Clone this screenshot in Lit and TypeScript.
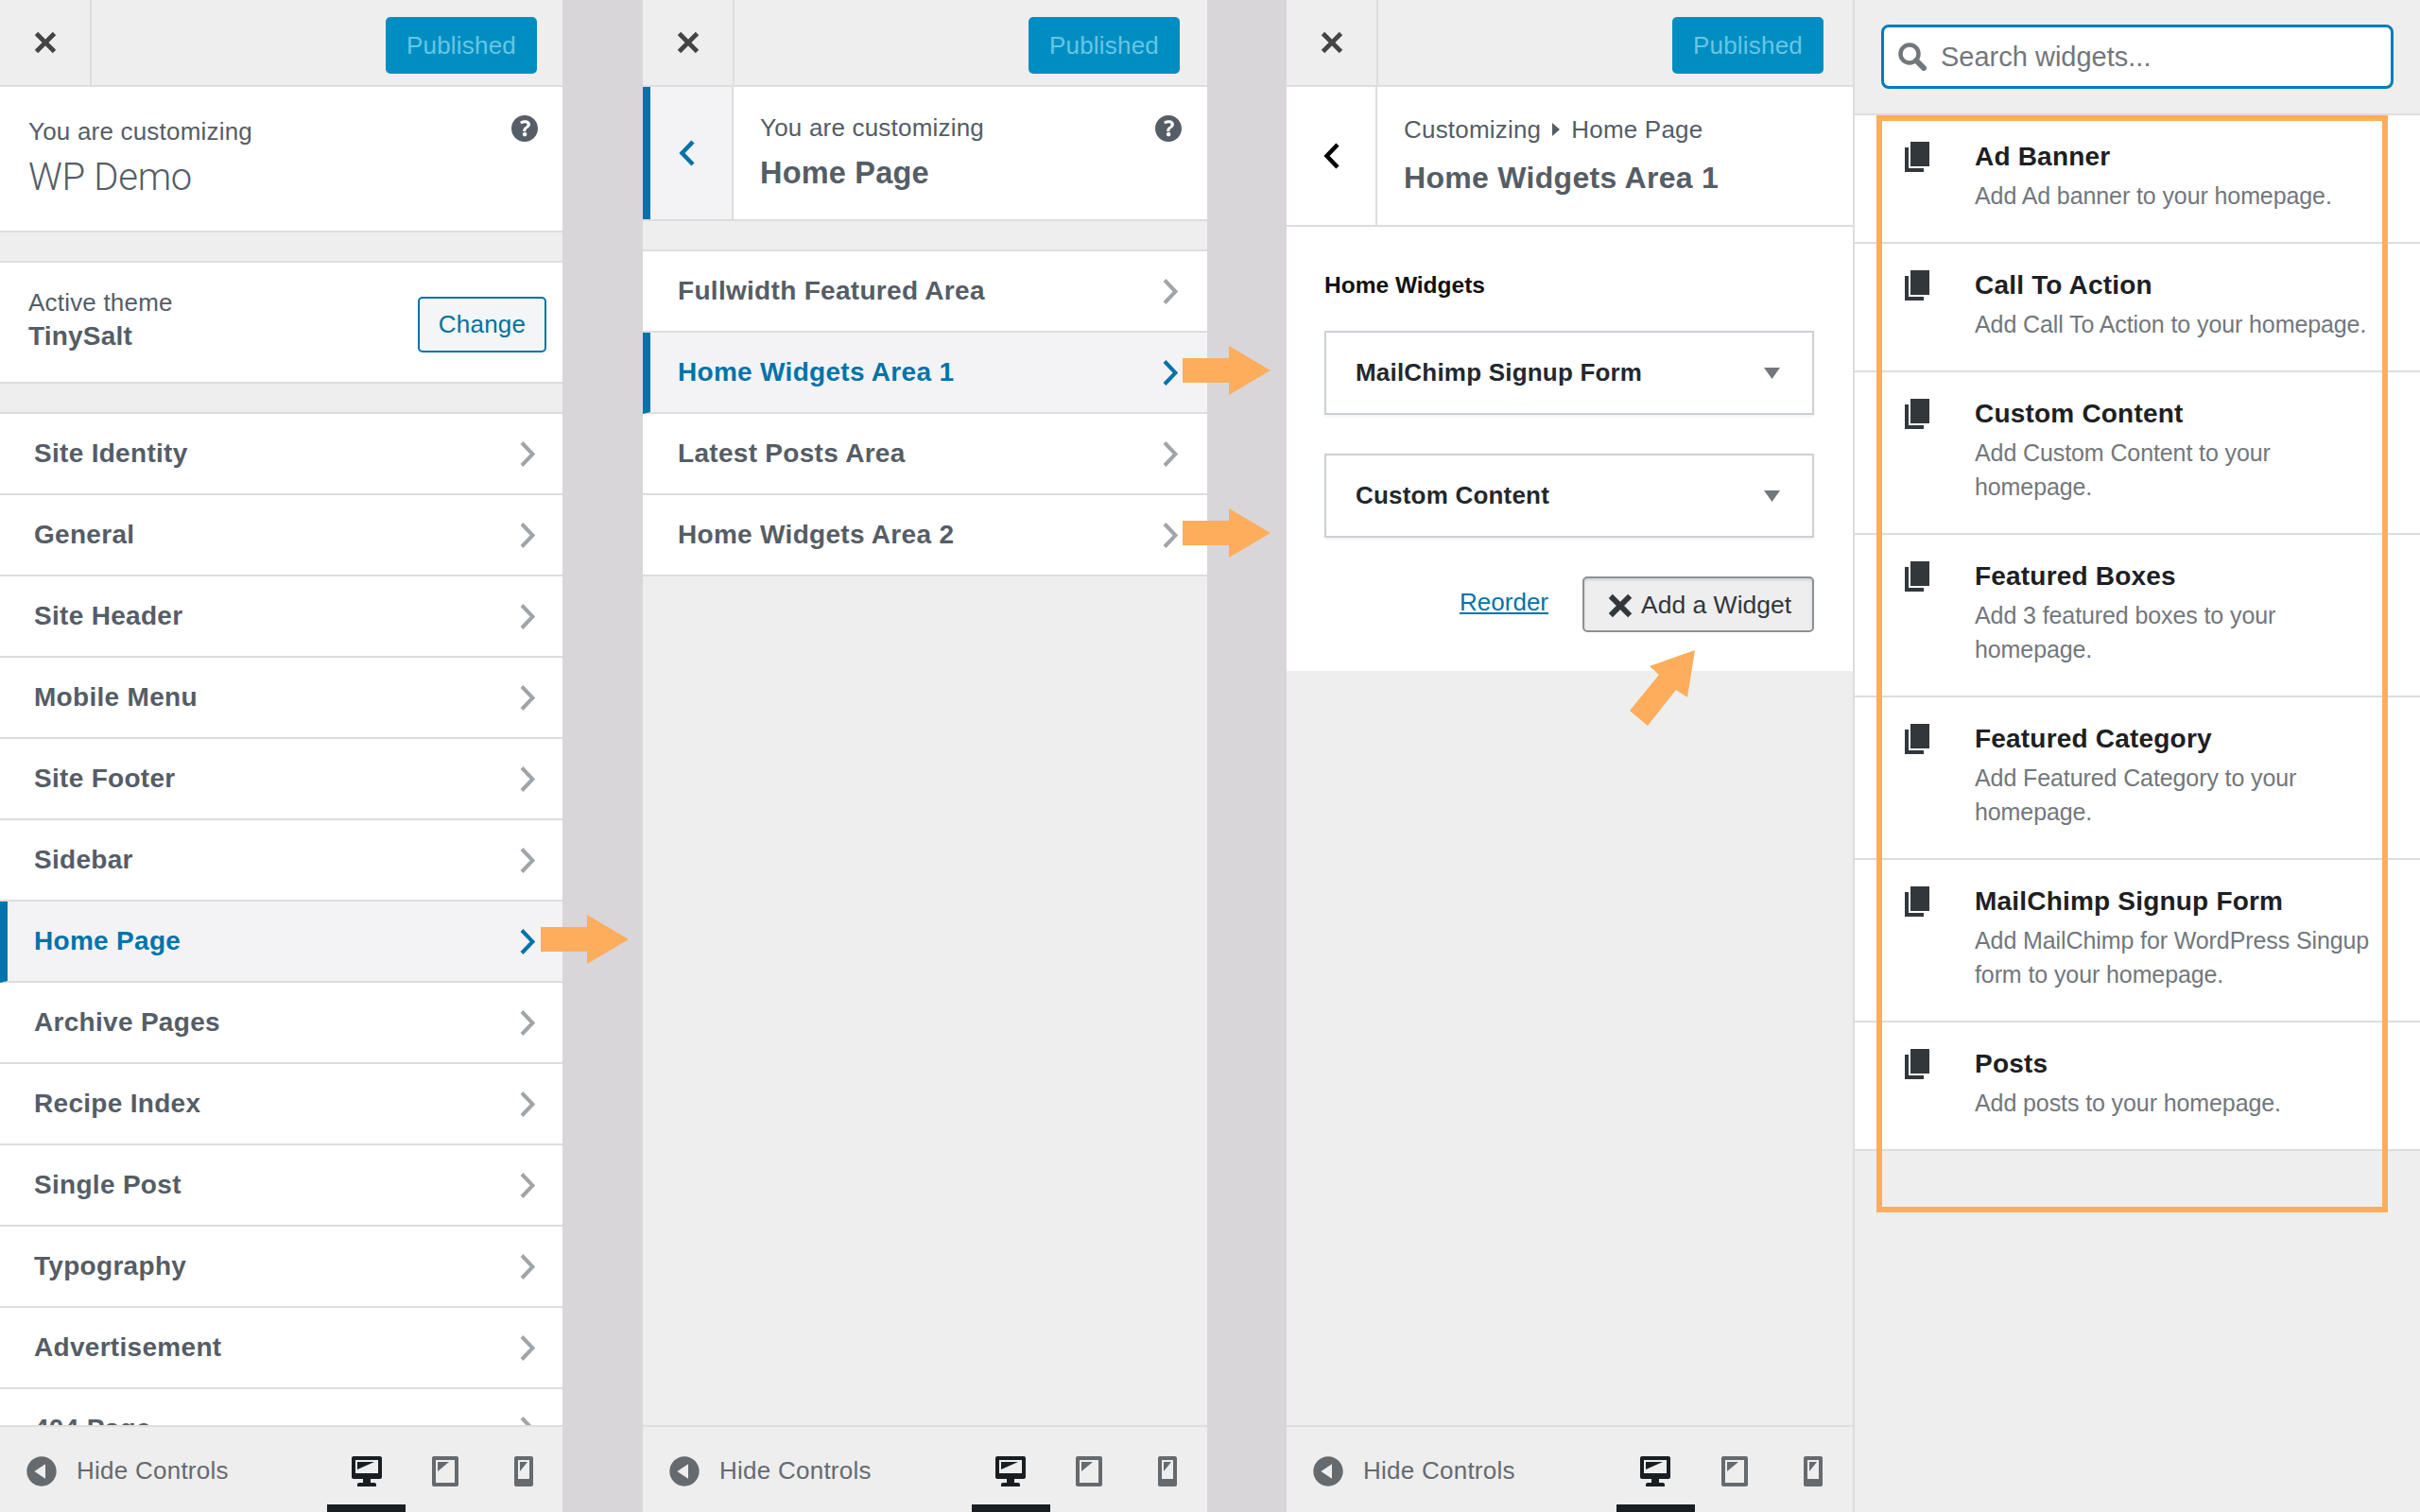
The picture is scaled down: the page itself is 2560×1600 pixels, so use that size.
import { LitElement, html, css, svg } from 'lit';
import { customElement } from 'lit/decorators.js';

const SIDE_ROWS = [
  'Site Identity', 'General', 'Site Header', 'Mobile Menu', 'Site Footer', 'Sidebar', 'Home Page',
  'Archive Pages', 'Recipe Index', 'Single Post', 'Typography', 'Advertisement', '404 Page',
];
const AREA_ROWS = ['Fullwidth Featured Area', 'Home Widgets Area 1', 'Latest Posts Area', 'Home Widgets Area 2'];
const WIDGETS = [
  { name: 'Ad Banner', desc: 'Add Ad banner to your homepage.' },
  { name: 'Call To Action', desc: 'Add Call To Action to your homepage.' },
  { name: 'Custom Content', desc: 'Add Custom Content to your homepage.' },
  { name: 'Featured Boxes', desc: 'Add 3 featured boxes to your homepage.' },
  { name: 'Featured Category', desc: 'Add Featured Category to your homepage.' },
  { name: 'MailChimp Signup Form', desc: 'Add MailChimp for WordPress Singup form to your homepage.' },
  { name: 'Posts', desc: 'Add posts to your homepage.' },
];

// dashicons, drawn at 40px so one unit is two pixels
const icon = (d: string, cls = '') => html`<svg class="dash ${cls}" viewBox="0 0 20 20">${svg`<path d=${d}></path>`}</svg>`;
const X = 'M14.95 6.46L11.41 10l3.54 3.54-1.41 1.41L10 11.42l-3.53 3.53-1.42-1.42L8.58 10 5.05 6.47l1.42-1.42L10 8.58l3.54-3.53z';
const HELP = 'M17 10c0-3.87-3.14-7-7-7-3.87 0-7 3.13-7 7 0 3.86 3.13 7 7 7 3.86 0 7-3.14 7-7zm-6.3 1.48H9.14v-.43c0-.38.08-.7.24-.98s.46-.57.88-.89c.41-.29.68-.53.81-.71.14-.18.2-.39.2-.62 0-.25-.09-.44-.28-.58-.19-.13-.45-.19-.79-.19-.59 0-1.26.19-2.02.57l-.64-1.28c.87-.49 1.8-.74 2.77-.74.81 0 1.45.2 1.92.58.48.39.71.91.71 1.55 0 .43-.09.8-.29 1.11-.19.32-.57.67-1.11 1.06-.38.28-.61.49-.71.63-.1.15-.15.34-.15.57v.35zm-1.47.74c.18-.2.46-.29.83-.29.36 0 .63.1.82.29.2.2.29.47.29.82 0 .33-.09.6-.29.8-.19.19-.46.29-.82.29-.37 0-.65-.1-.83-.29-.2-.19-.29-.46-.29-.8 0-.35.1-.62.29-.82z';
const COLLAPSE = 'M10 2.16c4.33 0 7.84 3.51 7.84 7.84s-3.51 7.84-7.84 7.84S2.16 14.33 2.16 10 5.71 2.16 10 2.16zm2 11.72V6.12L6.18 9.97z';
const DESKTOP = 'M3 2h14c.55 0 1 .45 1 1v10c0 .55-.45 1-1 1h-5v2h2c.55 0 1 .45 1 1v1H5v-1c0-.55.45-1 1-1h2v-2H3c-.55 0-1-.45-1-1V3c0-.55.45-1 1-1zm13 9V4H4v7h12zM5 5h9L5 9V5z';
const TABLET = 'M4 2h12c.55 0 1 .45 1 1v14c0 .55-.45 1-1 1H4c-.55 0-1-.45-1-1V3c0-.55.45-1 1-1zm11 14V4H5v12h10zM6 5h6l-6 5V5z';
const PHONE = 'M6 2h8c.55 0 1 .45 1 1v14c0 .55-.45 1-1 1H6c-.55 0-1-.45-1-1V3c0-.55.45-1 1-1zm7 12V4H7v10h6zM8 5h4l-4 5V5z';

const chevron = () => html`<svg class="chev" viewBox="0 0 16 27"><polyline points="2,1.5 13.5,13.5 2,25.5"></polyline></svg>`;
const backChevron = () => html`<svg class="back-chev" viewBox="0 0 17 28"><polyline points="15,2 3.5,14 15,26"></polyline></svg>`;

@customElement('app-root')
export class AppRoot extends LitElement {
  static override styles = css`
    :host {
      display: block;
      position: relative;
      width: 2560px;
      height: 1600px;
      overflow: hidden;
      background: #d8d6d8;
      font-family: "Liberation Sans", Arial, sans-serif;
      font-size: 26px;
      letter-spacing: 0.2px;
      color: #555d66;
    }
    .page { display: flex; height: 100%; }
    .panel {
      display: flex;
      flex-direction: column;
      height: 100%;
      background: #eeeeee;
      overflow: hidden;
    }
    .p1 { width: 595px; margin-right: 85px; }
    .p2 { width: 597px; margin-right: 84px; }
    .p3 { width: 599px; }
    .p4 { width: 600px; border-left: 2px solid #ddd; box-sizing: border-box; }

    .dash { width: 40px; height: 40px; display: block; flex: none; }
    .dash path { fill: currentColor; }

    .topbar {
      flex: none;
      display: flex;
      align-items: flex-start;
      justify-content: space-between;
      height: 90px;
      border-bottom: 2px solid #ddd;
    }
    .close {
      width: 95px;
      height: 90px;
      border-right: 2px solid #ddd;
      display: flex;
      align-items: center;
      justify-content: center;
      color: #444;
    }
    .close .dash { width: 44px; height: 44px; }
    .close .dash path { stroke: currentColor; stroke-width: 0.3; }
    .published {
      width: 160px;
      height: 60px;
      margin: 18px 27px 0 0;
      border-radius: 5px;
      background: #008ec2;
      color: #66c6e4;
      font-size: 26px;
      display: flex;
      align-items: center;
      justify-content: center;
    }
    .p2 .published { margin-right: 29px; }
    .p3 .published { margin-right: 31px; }

    .body { flex: 1; min-height: 0; overflow: hidden; }

    .info {
      display: flex;
      justify-content: space-between;
      align-items: flex-start;
      height: 124px;
      padding: 28px 20px 0 30px;
      background: #fff;
      border-bottom: 2px solid #ddd;
    }
    .info .dash { margin-top: -4px; }
    .line { line-height: 38px; }
    .site-title {
      margin-top: 2px;
      font-family: Roboto, "Liberation Sans", sans-serif;
      font-weight: 300;
      font-size: 40px;
      line-height: 56px;
      letter-spacing: -0.3px;
    }
    .gap { height: 30px; border-bottom: 2px solid #ddd; }
    .theme {
      display: flex;
      justify-content: space-between;
      align-items: flex-start;
      height: 126px;
      padding-left: 30px;
      background: #fff;
      border-bottom: 2px solid #ddd;
    }
    .theme-text { padding-top: 25px; line-height: 35px; }
    .theme-name { font-weight: 700; font-size: 28px; }
    .change {
      width: 136px;
      height: 59px;
      margin: 36px 17px 0 0;
      box-sizing: border-box;
      border: 2px solid #0073aa;
      border-radius: 5px;
      background: #f3f5f6;
      color: #0071a1;
      display: flex;
      align-items: center;
      justify-content: center;
    }

    .row {
      display: flex;
      align-items: center;
      justify-content: space-between;
      height: 84px;
      padding: 0 29px 0 36px;
      background: #fff;
      border-bottom: 2px solid #ddd;
      font-weight: 700;
      font-size: 28px;
      letter-spacing: 0.3px;
    }
    .p2 .row { padding: 0 31px 0 37px; }
    .row.active {
      background: #f3f3f5;
      color: #0073aa;
      padding-left: 28px;
      border-left: 8px solid #0073aa;
    }
    .p2 .row.active { padding-left: 29px; }
    .chev { width: 16px; height: 27px; flex: none; }
    .chev polyline { fill: none; stroke: #a0a5aa; stroke-width: 4; }
    .row.active .chev polyline { stroke: #0073aa; }

    .section {
      display: flex;
      background: #fff;
      border-bottom: 2px solid #ddd;
    }
    .p2 .section { height: 140px; }
    .p3 .section { height: 146px; }
    .back {
      flex: none;
      box-sizing: border-box;
      width: 96px;
      border-right: 2px solid #ddd;
      display: flex;
      align-items: center;
      justify-content: center;
      color: #000;
    }
    .p2 .back { border-left: 8px solid #0073aa; color: #0073aa; background: #f3f3f5; }
    .back-chev { width: 17px; height: 28px; }
    .p2 .back-chev { margin-right: 10px; }
    .back-chev polyline { fill: none; stroke: currentColor; stroke-width: 4.5; }
    .section-text { flex: 1; padding: 24px 0 0 28px; }
    .p3 .section-text { padding-top: 26px; }
    .section-head { display: flex; justify-content: space-between; align-items: flex-start; padding-right: 21px; }
    .section-title { margin-top: 8px; font-weight: 700; font-size: 32.5px; line-height: 38px; }
    .p3 .section-title { margin-top: 13px; font-size: 32px; letter-spacing: 0.3px; }
    .crumb { display: flex; align-items: center; gap: 12px; line-height: 38px; }
    .crumb-tri { width: 8px; height: 14px; flex: none; }
    .crumb-tri polygon { fill: #555d66; }

    .widgets {
      box-sizing: border-box;
      height: 470px;
      padding: 44px 41px 0 40px;
      background: #fff;
    }
    .widgets-label { font-weight: 700; font-size: 24.5px; line-height: 36px; letter-spacing: 0; color: #111; margin-bottom: 30px; }
    .select {
      box-sizing: border-box;
      display: flex;
      align-items: center;
      justify-content: space-between;
      height: 89px;
      margin-bottom: 41px;
      padding: 0 34px 0 31px;
      border: 2px solid #ccd0d4;
      box-shadow: 0 2px 3px rgba(0, 0, 0, 0.06);
      font-weight: 700;
      color: #23282d;
    }
    .select svg { width: 17px; height: 12px; }
    .select polygon { fill: #72777c; }
    .actions { display: flex; justify-content: flex-end; align-items: center; gap: 36px; }
    .reorder { color: #0073aa; text-decoration: underline; margin-top: -5px; letter-spacing: 0; }
    .add {
      box-sizing: border-box;
      display: flex;
      align-items: center;
      width: 245px;
      height: 59px;
      padding: 2px 0 0 26px;
      border: 2px solid #8c9196;
      border-radius: 5px;
      background: #eeeeee;
      box-shadow: inset 0 2px 3px rgba(0, 0, 0, 0.12);
      color: #32373c;
      font-size: 26.5px;
      letter-spacing: 0;
    }
    .add .dash { width: 46px; height: 46px; margin: 0 -1px 0 -11px; }
    .add .dash path { stroke: currentColor; stroke-width: 0.5; }

    .footer {
      flex: none;
      display: flex;
      align-items: center;
      height: 90px;
      padding-left: 24px;
      border-top: 2px solid #ddd;
      background: #eeeeee;
      color: #656a6f;
    }
    .hide { display: flex; align-items: center; gap: 17px; width: 327px; padding-top: 3px; letter-spacing: 0.25px; }
    .device { position: relative; box-sizing: border-box; width: 84px; height: 90px; padding-top: 3px; display: flex; align-items: center; justify-content: center; }
    .device.on { color: #191e23; }
    .device.on::after {
      content: "";
      position: absolute;
      left: 0;
      right: 0;
      bottom: 0;
      height: 8px;
      background: #191e23;
    }

    .search-wrap { flex: none; box-sizing: border-box; height: 122px; padding: 26px 0 0 28px; border-bottom: 2px solid #ddd; }
    .search {
      box-sizing: border-box;
      display: flex;
      align-items: center;
      gap: 15px;
      width: 542px;
      height: 68px;
      padding-left: 15px;
      border: 3px solid #007cba;
      border-radius: 8px;
      background: #fff;
      color: #72777c;
      font-size: 29px;
      letter-spacing: 0;
    }
    .search svg { width: 30px; height: 30px; flex: none; }
    .search circle, .search line { fill: none; stroke: #72777c; }
    .widget {
      display: flex;
      align-items: flex-start;
      padding: 26px 0 31px 53px;
      background: #fff;
      border-bottom: 2px solid #ddd;
    }
    .widget-icon { width: 26px; height: 32px; margin: 2px 48px 0 0; flex: none; }
    .widget-icon path { fill: #32373c; }
    .widget-name { font-weight: 700; font-size: 28px; line-height: 36px; letter-spacing: 0.2px; color: #1d2023; }
    .widget-desc { width: 430px; margin-top: 5px; font-size: 25px; line-height: 36px; letter-spacing: -0.1px; color: #72777c; }

    /* annotations drawn over the panels */
    .note { position: absolute; pointer-events: none; }
    .note polygon { fill: #fdad5c; }
    .arrow-a { left: 572px; top: 968px; width: 93px; height: 52px; }
    .arrow-b { left: 1251px; top: 366px; width: 93px; height: 52px; }
    .arrow-c { left: 1251px; top: 538px; width: 93px; height: 52px; }
    .arrow-d { left: 1724px; top: 688px; width: 70px; height: 80px; }
    .outline {
      position: absolute;
      left: 1985px;
      top: 122px;
      width: 541px;
      height: 1161px;
      box-sizing: border-box;
      border: 6px solid #fdad5c;
      pointer-events: none;
    }
  `;

  private topbar() {
    return html`<div class="topbar">
      <div class="close">${icon(X)}</div>
      <div class="published">Published</div>
    </div>`;
  }

  private footer() {
    return html`<div class="footer">
      <div class="hide">${icon(COLLAPSE)}<span>Hide Controls</span></div>
      <div class="device on">${icon(DESKTOP)}</div>
      <div class="device">${icon(TABLET)}</div>
      <div class="device">${icon(PHONE)}</div>
    </div>`;
  }

  private row(label: string, active: boolean) {
    return html`<div class="row ${active ? 'active' : ''}"><span>${label}</span>${chevron()}</div>`;
  }

  private arrow(cls: string) {
    return html`<svg class="note ${cls}" viewBox="0 0 93 52"><polygon points="0,13 49,13 49,0 93,26 49,52 49,39 0,39"></polygon></svg>`;
  }

  override render() {
    return html`
      <div class="page">
        <section class="panel p1">
          ${this.topbar()}
          <div class="body">
            <div class="info">
              <div>
                <div class="line">You are customizing</div>
                <div class="site-title">WP Demo</div>
              </div>
              ${icon(HELP)}
            </div>
            <div class="gap"></div>
            <div class="theme">
              <div class="theme-text">
                <div>Active theme</div>
                <div class="theme-name">TinySalt</div>
              </div>
              <div class="change">Change</div>
            </div>
            <div class="gap"></div>
            ${SIDE_ROWS.map(r => this.row(r, r === 'Home Page'))}
          </div>
          ${this.footer()}
        </section>

        <section class="panel p2">
          ${this.topbar()}
          <div class="body">
            <div class="section">
              <div class="back">${backChevron()}</div>
              <div class="section-text">
                <div class="section-head"><div class="line">You are customizing</div>${icon(HELP)}</div>
                <div class="section-title">Home Page</div>
              </div>
            </div>
            <div class="gap"></div>
            ${AREA_ROWS.map(r => this.row(r, r === 'Home Widgets Area 1'))}
          </div>
          ${this.footer()}
        </section>

        <section class="panel p3">
          ${this.topbar()}
          <div class="body">
            <div class="section">
              <div class="back">${backChevron()}</div>
              <div class="section-text">
                <div class="crumb">
                  <span>Customizing</span>
                  <svg class="crumb-tri" viewBox="0 0 8 14"><polygon points="0,0 8,7 0,14"></polygon></svg>
                  <span>Home Page</span>
                </div>
                <div class="section-title">Home Widgets Area 1</div>
              </div>
            </div>
            <div class="widgets">
              <div class="widgets-label">Home Widgets</div>
              ${['MailChimp Signup Form', 'Custom Content'].map(s => html`<div class="select">
                <span>${s}</span>
                <svg viewBox="0 0 17 12"><polygon points="0,0 17,0 8.5,12"></polygon></svg>
              </div>`)}
              <div class="actions">
                <span class="reorder">Reorder</span>
                <div class="add">${icon(X)}<span>Add a Widget</span></div>
              </div>
            </div>
          </div>
          ${this.footer()}
        </section>

        <section class="panel p4">
          <div class="search-wrap">
            <div class="search">
              <svg viewBox="0 0 30 30">
                <circle cx="12" cy="12" r="9.5" stroke-width="4.5"></circle>
                <line x1="19" y1="19" x2="27" y2="27" stroke-width="6" stroke-linecap="round"></line>
              </svg>
              <span>Search widgets...</span>
            </div>
          </div>
          ${WIDGETS.map(w => html`<div class="widget">
            <svg class="widget-icon" viewBox="0 0 26 32"><path d="M6 0h20v26H6zM0 6h4v22h16v4H0z"></path></svg>
            <div>
              <div class="widget-name">${w.name}</div>
              <div class="widget-desc">${w.desc}</div>
            </div>
          </div>`)}
        </section>
      </div>

      ${this.arrow('arrow-a')}
      ${this.arrow('arrow-b')}
      ${this.arrow('arrow-c')}
      <svg class="note arrow-d" viewBox="0 0 70 80">
        <polygon points="69,0 61,50 49,42 19,80 0,64 31,26 21,17"></polygon>
      </svg>
      <div class="outline"></div>
    `;
  }
}

declare global {
  interface HTMLElementTagNameMap {
    'app-root': AppRoot;
  }
}
